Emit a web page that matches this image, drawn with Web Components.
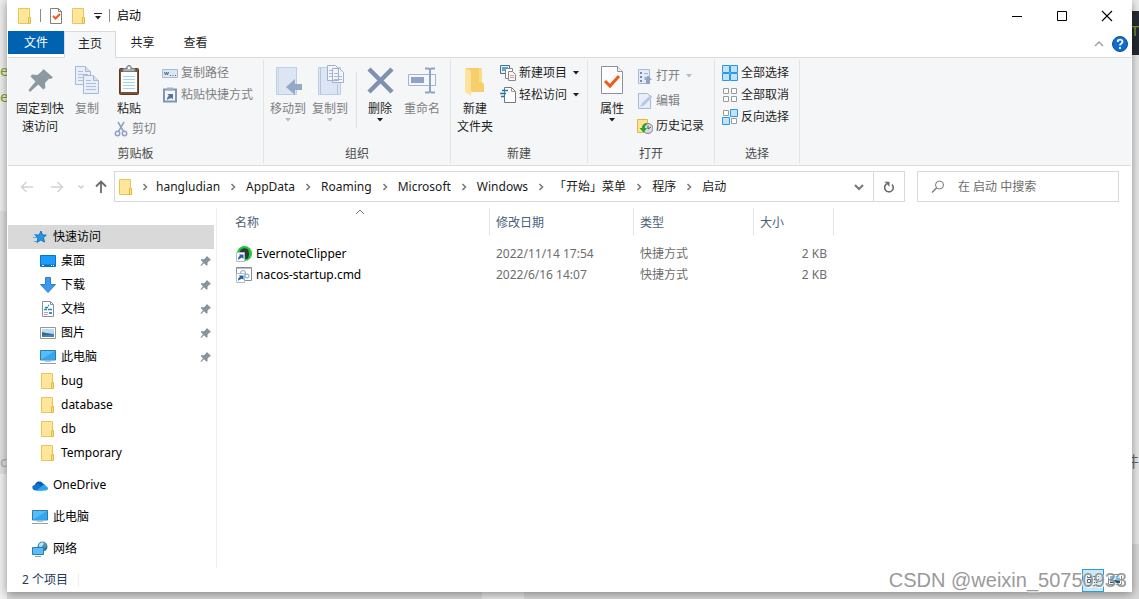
<!DOCTYPE html>
<html lang="zh-CN">
<head>
<meta charset="utf-8">
<meta name="viewport" content="width=device-width, initial-scale=1">
<title>启动</title>
<style>
html, body { margin: 0; height: 100%; }
body {
  font: 12px/18px "Noto Sans", "Noto Sans CJK SC", sans-serif;
  color: #000;
  --ink: #1e1e1e;
  --muted: #7d7f82;
  --line: #dadbdc;
  --pane: #f5f6f7;
  --accent: #0063b1;
}
</style>
</head>
<body>
<desk-top>
  <explorer-window>
    <title-bar slot="title" heading="启动"></title-bar>
    <tab-strip slot="tabs"></tab-strip>
    <ribbon-bar slot="ribbon">
      <ribbon-group label="剪贴板" style="--w:255px">
        <big-button icon="pin" style="--bw:64px">固定到快<br>速访问</big-button>
        <big-button icon="copy" off style="--bw:30px">复制</big-button>
        <ribbon-column style="--cw:54px;--al:flex-end">
          <big-button icon="paste" style="--bw:54px">粘贴</big-button>
          <small-button icon="cut" off>剪切</small-button>
        </ribbon-column>
        <ribbon-column style="--pl:5px">
          <small-button icon="path" off>复制路径</small-button>
          <small-button icon="pastelink" off>粘贴快捷方式</small-button>
        </ribbon-column>
      </ribbon-group>
      <ribbon-group label="组织" style="--w:186px">
        <big-button icon="moveto" off menu style="--bw:48px">移动到</big-button>
        <big-button icon="copyto" off menu style="--bw:36px">复制到</big-button>
        <ribbon-rule></ribbon-rule>
        <big-button icon="delete" menu style="--bw:40px">删除</big-button>
        <big-button icon="rename" off style="--bw:44px">重命名</big-button>
      </ribbon-group>
      <ribbon-group label="新建" style="--w:136px">
        <big-button icon="newfolder" style="--bw:48px">新建<br>文件夹</big-button>
        <ribbon-column>
          <small-button icon="newitem" menu>新建项目</small-button>
          <small-button icon="easy" menu>轻松访问</small-button>
        </ribbon-column>
      </ribbon-group>
      <ribbon-group label="打开" style="--w:126px">
        <big-button icon="props" menu style="--bw:48px">属性</big-button>
        <ribbon-column style="--pt:3px;--rg:3px">
          <small-button icon="open" off menu>打开</small-button>
          <small-button icon="edit" off>编辑</small-button>
          <small-button icon="history">历史记录</small-button>
        </ribbon-column>
      </ribbon-group>
      <ribbon-group label="选择" style="--w:84px">
        <ribbon-column style="--pl:6px">
          <small-button icon="selall">全部选择</small-button>
          <small-button icon="selnone">全部取消</small-button>
          <small-button icon="selinv">反向选择</small-button>
        </ribbon-column>
      </ribbon-group>
    </ribbon-bar>
    <address-bar slot="address"></address-bar>
    <nav-tree slot="nav">
      <nav-item icon="star" selected root>快速访问</nav-item>
      <nav-item icon="desktop" pinned>桌面</nav-item>
      <nav-item icon="download" pinned>下载</nav-item>
      <nav-item icon="docs" pinned>文档</nav-item>
      <nav-item icon="pics" pinned>图片</nav-item>
      <nav-item icon="pc" pinned>此电脑</nav-item>
      <nav-item icon="folder">bug</nav-item>
      <nav-item icon="folder">database</nav-item>
      <nav-item icon="folder">db</nav-item>
      <nav-item icon="folder">Temporary</nav-item>
      <nav-item icon="cloud" root spaced>OneDrive</nav-item>
      <nav-item icon="pc" root spaced>此电脑</nav-item>
      <nav-item icon="network" root spaced>网络</nav-item>
    </nav-tree>
    <file-list slot="files"></file-list>
    <status-bar slot="status">2 个项目</status-bar>
  </explorer-window>
  <span slot="mark">CSDN @weixin_50750933</span>
</desk-top>

<script>
const folder = '<path d="M1.5.5h11v15h-11z" fill="#ffe699" stroke="#e8c55a"/><path d="M11.500 9.500h2v6h-2z" fill="#ffe08a" stroke="#e3b93f"/>';
const shortcut = '<path d="M.5 6.500h8v9h-8z" fill="#fff" stroke="#b5bcc4"/><path d="M2 14c0-3 1-4 2-4L3 8.500h4.500V13L6 11.500C5 12.500 3.500 12.500 2 14z" fill="#1c5fb0"/>';
const tile = (x, y, on) => on
  ? `<path d="M${x + .5} ${y + .5}h7v7h-7z" fill="#bfe3fb" stroke="#2f96e6"/>`
  : `<path d="M${x + .5} ${y + .5}h5v5h-5z" fill="#fff" stroke="#9a9a9a"/>`;
const sheet = (x, y) => `<path d="M${x + .5} ${y + .5}h10l5 5v13h-15z" fill="#e9effa" stroke="#a9b8d4"/><path d="M${x + 10.500} ${y + .5}v5h5" fill="#d5dff0" stroke="#a9b8d4"/><path d="M${x + 3} ${y + 5.500}h5M${x + 3} ${y + 8.500}h10M${x + 3} ${y + 11.500}h10M${x + 3} ${y + 14.500}h10" stroke="#aebdd9"/>`;
const ICONS = {
  folder: [16, 16, folder],
  pin: [32, 32, '<path d="M19.500 5 29 13.500l-2.500 1.500-1.500-.3-4 4.300.3 5-2 1.500-5-5-8.300 7.500L4.500 26l7-8.500-5-5L8 10.500l5.500.5 4.500-4z" fill="#8d99a1"/>'],
  smallpin: [12, 12, '<path d="M7 1l4 4-1.500.8L7.500 7.500 7.600 10l-1 .7L4 8.200 1.200 11l-.8-.6L3 7.200.8 5l.8-1 2.600.2L6 2.300z" fill="#8593a0"/>'],
  copy: [32, 32, sheet(4, 2) + sheet(12, 11)],
  paste: [32, 32, '<rect x="6.500" y="4.500" width="19" height="26" rx="1" fill="#7a5236" stroke="#5b3a22"/><path d="M8 8h16v20H8z" fill="#fafdff"/><path d="M10 12.500h12M10 15.500h12M10 18.500h12M10 21.500h12M10 24.500h12" stroke="#a9d2ee"/><path d="M10 7.500V4.500h3.500c0-4 5-4 5 0H22v3z" fill="#a9aeb3" stroke="#777c81"/><circle cx="16" cy="4" r="1.200" fill="#fff"/>'],
  cut: [16, 16, '<g fill="none" stroke="#8fa2bf" stroke-width="1.500"><path d="M5 1l5.500 9.500M11 1L5.500 10.500"/><circle cx="4.500" cy="12.500" r="2.200"/><circle cx="11.500" cy="12.500" r="2.200"/></g>'],
  path: [16, 16, '<path d="M.5 4.500h15v8H.5z" fill="#dbe6f5" stroke="#a9bad3"/><path d="M2.500 7l1 3 1-3 1 3 1-3" fill="none" stroke="#53698c"/><path d="M8 10.500h1M10.500 10.500h1M13 10.500h1" stroke="#53698c"/>'],
  pastelink: [16, 16, '<path d="M2 2.500h12v12H2z" fill="#f4f8fd" stroke="#7f95b9" stroke-width="2"/><path d="M5 .5h6v3H5z" fill="#9fb1cc"/><path d="M5 13c0-3 1-4 2-4L5.500 7H11v5.500L9.500 11C8 12 6.500 11.500 5 13z" fill="#58729d"/>'],
  moveto: [32, 32, '<path d="M4.500 3.500h20v27h-20z" fill="#dbe5f4" stroke="#c0cee4"/><path d="M6.500 4v26" stroke="#c9d6ea"/><path d="M14 23l9-8v5h7v6h-7v5z" fill="#95a8c6"/>'],
  copyto: [32, 32, '<path d="M4.500 3.500h22v27h-22z" fill="#dbe5f4" stroke="#c0cee4"/><path d="M6.500 4v26M23.500 20v11" stroke="#b4c4dd"/><path d="M13.500 1.500h8l3 3v12h-11zM18.500 4.500h7l4 4v10h-11z" fill="#f2f6fc" stroke="#9fb1cf"/><path d="M15 6.500h3M15 9.500h3M15 12.500h3M20 9.500h4M20 12.500h8M20 15.500h8" stroke="#a9bad6"/>'],
  delete: [32, 32, '<path d="M5 5l23 23M28 5L5 28" stroke="#8090b0" stroke-width="4.500"/>'],
  rename: [32, 32, '<path d="M2.500 10.500h27v11h-27z" fill="#f4f8fe" stroke="#a3b4d2"/><path d="M5 13h13v6H5z" fill="#8ea3c6"/><path d="M24 5v23M19 4.500h3.500l1.500 1 1.500-1H29M19 28.500h3.500l1.500-1 1.500 1H29" fill="none" stroke="#8ea2c4" stroke-width="2"/>'],
  newfolder: [32, 32, '<path d="M7 4h16v14l2 2v8H10z" fill="#f6cf6a"/><path d="M6 4l6 3v25l-6-4z" fill="#ffe39a"/><path d="M20 4h3v14h-3z" fill="#fbdb85"/>'],
  newitem: [16, 16, '<path d="M.5.500h9v8h-9z" fill="#e2f2fb" stroke="#4a7186"/><path d="M2 2h6v4H2z" fill="#58a9d6"/><path d="M5.500 3.500h7v10h-7z" fill="#fff" stroke="#888"/><path d="M8.500 6.500h4l3 3v6h-7z" fill="#f5f7fa" stroke="#888"/><path d="M10 10.500h4M10 12.500h4" stroke="#e39a8b"/>'],
  easy: [16, 16, '<path d="M4.500.5h7l4 4v11h-11z" fill="#fff" stroke="#777"/><path d="M11.500.5v4h4" fill="none" stroke="#999"/><path d="M2 3.500h6M0 6.500h6M1 9.500h4" stroke="#1b76b8" stroke-width="1.500"/>'],
  props: [32, 32, '<path d="M5.500 2.500h16l5 5v22h-21z" fill="#fcfcfc" stroke="#8f9296"/><path d="M21.500 2.500v5h5" fill="#eee" stroke="#8f9296"/><path d="M9 17l5 5 9-10" fill="none" stroke="#f05a14" stroke-width="3"/>'],
  open: [16, 16, '<path d="M1.500 1.500h11v14h-11z" fill="#e3ebf7" stroke="#a9b9d3"/><path d="M3 4h2v2H3zM3 8h2v2H3zM3 12h2v2H3z" fill="#6f8ab5"/><path d="M7 5.500h4M7 9.500h3" stroke="#a0b2d0"/><path d="M9 16v-4H7l4-4.500 4 4.500h-2v4z" fill="#8ea3c6"/>'],
  edit: [16, 16, '<path d="M1.500.5h9l3 3v12h-12z" fill="#e6eefa" stroke="#a9b9d3"/><path d="M3 14l2-4 8.500-8 2 2-8.500 8.500z" fill="#b8c8e2"/>'],
  history: [16, 16, '<path d="M.5 1.500h10v13H.5z" fill="#ffe38f" stroke="#dcb84d"/><circle cx="11" cy="10.500" r="5" fill="#d9dcdf" stroke="#7d8286"/><path d="M11 7.500v3.500l3-2" fill="none" stroke="#555"/><path d="M9.500 5C6 5.500 5 8 5 10H2.500l4 4.500 3.500-4.500H7.800C8 8 8.500 7 10 6.500z" fill="#26a036"/>'],
  selall: [16, 16, tile(0, 0, 1) + tile(8, 0, 1) + tile(0, 8, 1) + tile(8, 8, 1)],
  selnone: [16, 16, tile(1, 1) + tile(9, 1) + tile(1, 9) + tile(9, 9)],
  selinv: [16, 16, tile(1, 1) + tile(8, 0, 1) + tile(0, 8, 1) + tile(9, 9)],
  star: [16, 16, '<path d="M9 2l1.500 4h3.800l-2.800 2.800 1 4.200L8.700 11 5 13.500 6 9 3.500 6.500 7.200 6z" fill="#2a93e0" stroke="#1576bd"/><path d="M2 5.500h4M1 8.500h4M2 12.500h3" stroke="#4aa9ea"/>'],
  desktop: [16, 16, '<path d="M.5 2.500h15v11H.5z" fill="#1a9dfc" stroke="#0d72c4"/><path d="M1 11.500h14v1.500H1z" fill="#0b6fc2"/><path d="M2 12.500h2M11 12.500h1M13 12.500h1" stroke="#fff"/>'],
  download: [16, 16, '<path d="M5.500.5h5v7h5L8 15.500.500 7.500h5z" fill="#3b98ea" stroke="#2a7ed0"/>'],
  docs: [16, 16, '<path d="M2.500.5h8l3 3v12h-11z" fill="#fff" stroke="#8b9096"/><path d="M10.500.5v3h3" fill="none" stroke="#8b9096"/><path d="M5 6.500h3M8 4.500h1M4 8.500h3M8 8.500h4" stroke="#1c86c8" stroke-width="1.500"/><path d="M4 11.500h4M4 13.500h4" stroke="#a5adb3"/><path d="M9 11h3v2H9z" fill="#4d8fa5"/>'],
  pics: [16, 16, '<path d="M.5 2.500h15v11H.5z" fill="#fff" stroke="#94989c"/><path d="M2 4h12v8H2z" fill="#b9dcf3"/><path d="M2 7l4 1 8 1v3H2z" fill="#356b74"/><path d="M2 10.500l12-1.500v3H2z" fill="#4b7fb6"/>'],
  pc: [16, 16, '<path d="M.5 1.500h15v9.500H.5z" fill="#56bdfa" stroke="#2f7cac"/><path d="M1 10.500L15 2v8.500z" fill="#35a6f3"/><path d="M5 12.500h6" stroke="#b5c4cf"/><path d="M0 14.500h16" stroke="#8f9fae"/>'],
  cloud: [16, 16, '<path d="M3 9c-.5-4 5-6.500 8-2.500L13 8l-8 5z" fill="#0a5cb5"/><path d="M4 13.500c-4.500 0-5-5-1-5.700C5 6.500 8 7.500 9 8.500l2 5z" fill="#1173d0"/><path d="M4.500 13.500L10 9c1-2 4-1.500 4.200.4 2.500.6 2.300 4-.4 4.100z" fill="#28a4ea"/>'],
  network: [16, 16, '<circle cx="10.500" cy="5.500" r="5" fill="#4f93b5"/><path d="M7 3.500c2-2.500 4-2.500 5-1L9.500 6 7 5.500z" fill="#bfe0ee"/><path d="M12 8l3-3c.5 2-.5 4-2 5z" fill="#2f6f94"/><path d="M.5 6.500h11v7H.5z" fill="#56bdfa" stroke="#2f7cac"/><path d="M3 15.500h6" stroke="#8f9fae"/>'],
  check: [16, 16, '<path d="M2.500.5h8l3 3v12h-11z" fill="#fdfdfd" stroke="#7f8285"/><path d="M10.500.5v3h3" fill="none" stroke="#7f8285"/><path d="M5 8l2.500 2.500L12 6" fill="none" stroke="#f05a14" stroke-width="2"/>'],
  evernote: [16, 16, '<circle cx="8.500" cy="7.500" r="7.500" fill="#1bcb35"/><path d="M4 6c0-4 7-5 8.500-1.500C13.500 8 13 12 11 13c-2 .5-2.500-1.500-1.500-2.500L8 9 4 8z" fill="#33353d"/>' + shortcut],
  cmd: [16, 16, '<path d="M.5.500h15v13H.5z" fill="#fff" stroke="#8a8d92"/><path d="M1 1.500h14" stroke="#b9bcc0"/><g fill="none" stroke="#8fa3b5"><circle cx="7" cy="6" r="2.500"/><circle cx="11" cy="9" r="2" stroke="#6ba6d0"/></g>' + shortcut],
  back: [14, 14, '<path d="M13 7H1.500M6.500 2L1.500 7l5 5" fill="none" stroke="#d2d2d2" stroke-width="1.500"/>'],
  forward: [14, 14, '<path d="M1 7h11.500M7.500 2l5 5-5 5" fill="none" stroke="#d2d2d2" stroke-width="1.500"/>'],
  up: [14, 14, '<path d="M7 13V2M2 6.500l5-5 5 5" fill="none" stroke="#6b6b6b" stroke-width="1.800"/>'],
  recent: [8, 8, '<path d="M1.500 2.500L4 5l2.500-2.500" fill="none" stroke="#cfcfcf" stroke-width="1.500"/>'],
  chevron: [8, 8, '<path d="M2.500 1L5.500 4l-3 3" fill="none" stroke="#777" stroke-width="1.500"/>'],
  drop: [10, 10, '<path d="M1 3l4 4 4-4" fill="none" stroke="#777" stroke-width="2"/>'],
  refresh: [12, 12, '<path d="M3.500 3A4.300 4.300 0 1 0 9 3.500" fill="none" stroke="#6b6b6b" stroke-width="1.600"/><path d="M1.500.800h5v5z" fill="#6b6b6b"/>'],
  search: [14, 14, '<circle cx="8.500" cy="5" r="4" fill="none" stroke="#777"/><path d="M5.500 8L1 12.500" stroke="#777" stroke-width="1.300"/>'],
  collapse: [10, 10, '<path d="M1 7l4-4 4 4" fill="none" stroke="#a0a0a0" stroke-width="1.500"/>'],
  sort: [10, 6, '<path d="M1 5l4-4 4 4" fill="none" stroke="#777"/>'],
  caret: [6, 4, '<path d="M0 0h6L3 3.500z" fill="currentColor"/>'],
  qat: [8, 8, '<path d="M0 1.500h8" stroke="#222"/><path d="M1 4h6L4 7.500z" fill="#222"/>'],
  help: [16, 16, '<circle cx="8" cy="8" r="7.500" fill="#0f6ecd" stroke="#0b4f97"/><path d="M5.700 6c0-3.200 4.800-3 4.800-.3C10.500 7.500 8 7.500 8 9.500M8 11v2" fill="none" stroke="#fff" stroke-width="1.800"/>'],
  min: [10, 10, '<path d="M0 5.500h10" stroke="#000"/>'],
  max: [10, 10, '<path d="M.5.500h9v9h-9z" fill="none" stroke="#000"/>'],
  close: [12, 12, '<path d="M1 1l10 10M11 1L1 11" stroke="#000" stroke-width="1.100"/>'],
  details: [14, 14, '<g stroke="#5f6b75"><path d="M1.500 1.500h3v3h-3zM1.500 6.500h3v3h-3z" fill="#fff"/><path d="M6 3.500h3M10 3.500h3M6 6.500h3M10 6.500h3M6 9.500h3M10 9.500h3M1 12.500h4M6 12.500h3M10 12.500h3"/></g>'],
  thumbs: [14, 14, '<path d="M.5 1.500h13v10H.5z" fill="#fff" stroke="#888"/><path d="M2 3h10v7H2z" fill="#7fbbe8"/><path d="M2 6l10 2v2H2z" fill="#2b5566"/>']
};

const RESET = `:host,*{box-sizing:border-box}button,input{font:inherit;color:inherit;border:0;background:none;padding:0;margin:0}a{color:inherit;text-decoration:none}`;

function define(name, css, html) {
  customElements.define(name, class extends HTMLElement {
    constructor() {
      super();
      const root = this.attachShadow({ mode: 'open' });
      const t = document.createElement('template');
      t.innerHTML = `<style>${RESET}${css}</style>${typeof html === 'function' ? html(this) : html}`;
      root.append(t.content.cloneNode(true));
    }
  });
}
const icon = name => `<ui-icon name="${name}"></ui-icon>`;

define('ui-icon', `:host{display:inline-block;flex:none;line-height:0}svg{display:block}`, el => {
  const [w, h, body] = ICONS[el.getAttribute('name')];
  return `<svg width="${w}" height="${h}" viewBox="0 0 ${w} ${h}" aria-hidden="true">${body}</svg>`;
});

define('desk-top', `
  :host{display:block;position:relative;min-height:100vh;padding:0 7px 7px;overflow:hidden;background:#d8d8d8}
  .l,.r{position:absolute;top:0;bottom:0;width:7px;overflow:hidden}
  .l{left:0;background:linear-gradient(#ececec 211px,#dfdfdf 211px 474px,#efefef 474px)}
  .r{right:0;background:linear-gradient(#ececec 11px,#262b31 11px 55px,#e8e8e8 55px 544px,#d8d8d8 544px)}
  .b{position:absolute;left:482px;width:42px;bottom:0;height:7px;background:#e8e8e8}
  .code{position:absolute;font:15px/20px "Noto Sans",sans-serif;color:#7f9f2b}
  .l .code{left:0}
  .r .code{right:0}
  .mark{position:absolute;right:12px;bottom:7px;font:20px/24px "Liberation Sans",sans-serif;color:#909090;opacity:.9;text-shadow:1px 1px 0 #fff;white-space:nowrap;pointer-events:none}
`, `
  <div class="l"><span class="code" style="top:60px">e</span><span class="code" style="top:86px">e</span><span class="code" style="top:451px;color:#aaa">c</span></div>
  <div class="r"><span class="code" style="top:20px">T</span><span class="code" style="top:451px;color:#666;font-family:'Noto Sans CJK SC',sans-serif">件</span></div>
  <div class="b"></div>
  <slot></slot>
  <div class="mark"><slot name="mark"></slot></div>`);

define('explorer-window', `
  :host{display:flex;flex-direction:column;position:relative;min-height:calc(100vh - 7px);background:#fff;padding:0 1px;box-shadow:0 2px 9px rgba(0,0,0,.4)}
  main{display:flex;flex:1;margin-left:-1px}
`, `<slot name="title"></slot><slot name="tabs"></slot><slot name="ribbon"></slot><slot name="address"></slot>
  <main><slot name="nav"></slot><slot name="files"></slot></main><slot name="status"></slot>`);

define('title-bar', `
  :host{display:flex;align-items:center;height:31px;padding:0 2px 0 9px}
  button{display:flex;align-items:center;justify-content:center}
  i{width:1px;height:13px;background:#8a8a8a}
  h1{font:inherit;margin:0 auto 0 7px}
  .qat{display:flex;align-items:center;gap:7px}
  .win button{width:45px;height:30px}.win{display:flex}
`, el => `
  <div class="qat">${icon('folder')}<i></i>
    <button aria-label="属性">${icon('check')}</button>
    <button aria-label="新建文件夹">${icon('folder')}</button>
    <button aria-label="自定义快速访问工具栏">${icon('qat')}</button><i></i></div>
  <h1>${el.getAttribute('heading')}</h1>
  <div class="win"><button aria-label="最小化">${icon('min')}</button><button aria-label="最大化">${icon('max')}</button><button aria-label="关闭">${icon('close')}</button></div>`);

define('tab-strip', `
  :host{display:flex;height:27px;border-bottom:1px solid var(--line)}
  button{width:53px;height:26px;color:var(--ink);padding-bottom:2px}
  .file{width:56px;height:23px;padding:0;background:var(--accent);color:#fff}
  .on{width:52px;height:27px;background:var(--pane);border:1px solid var(--line);border-bottom:0}
  .end{margin-left:auto;display:flex;align-items:center;gap:8px;padding-right:3px}
  .end button{width:auto;height:auto;padding:0;display:flex}
`, `<button class="file">文件</button><button class="on">主页</button><button>共享</button><button>查看</button>
  <div class="end"><button aria-label="最小化功能区">${icon('collapse')}</button><button aria-label="帮助">${icon('help')}</button></div>`);

define('ribbon-bar', `:host{display:flex;height:108px;background:var(--pane);border-bottom:1px solid var(--line);padding:2px 0}`, `<slot></slot>`);

define('ribbon-group', `
  :host{display:flex;flex-direction:column;width:calc(var(--w) + 1px);border-right:1px solid #e2e3e4;color:var(--ink)}
  .body{display:flex;flex:1;padding-top:2px}
  .label{text-align:center;color:#4a4a4a;height:18px}
`, el => `<div class="body"><slot></slot></div><div class="label">${el.getAttribute('label')}</div>`);

define('ribbon-column', `:host{display:flex;flex-direction:column;align-items:var(--al,flex-start);gap:var(--rg,0);width:var(--cw,auto);padding-left:var(--pl,0);padding-top:var(--pt,0)}`, `<slot></slot>`);
define('ribbon-rule', `:host{width:1px;height:56px;margin:10px 3px 0 8px;background:#dfe0e1}`, ``);

define('big-button', `
  :host{display:block;width:var(--bw);padding-top:2px}
  :host([off]){color:var(--muted)}
  button{display:flex;flex-direction:column;align-items:center;width:100%;white-space:nowrap}
  button>ui-icon{margin-bottom:4px}
  .m{height:4px;display:flex}
  :host([off]) .m{color:#b9babb}
`, el => `<button${el.hasAttribute('off') ? ' disabled' : ''}>${icon(el.getAttribute('icon'))}<span><slot></slot></span>${el.hasAttribute('menu') ? `<span class="m">${icon('caret')}</span>` : ''}</button>`);

define('small-button', `
  :host{display:block}
  :host([off]){color:var(--muted)}
  button{display:flex;align-items:center;gap:3px;height:22px;padding:0 0 0 1px;white-space:nowrap}
  .m{display:flex;margin-left:3px}
  :host([off]) .m{color:#b9babb}
`, el => `<button${el.hasAttribute('off') ? ' disabled' : ''}>${icon(el.getAttribute('icon'))}<span><slot></slot></span>${el.hasAttribute('menu') ? `<span class="m">${icon('caret')}</span>` : ''}</button>`);

define('address-bar', `
  :host{display:flex;align-items:center;height:42px;padding:0 12px 1px 4px;color:#1a1a1a}
  button{display:flex;align-items:center;justify-content:center}
  .go{display:flex;align-items:center;width:102px}
  .go button{width:30px}.go .n{width:17px}.go .u{width:23px}
  .box{display:flex;flex:1;height:31px;border:1px solid #d9d9d9}
  nav{display:flex;flex:1;align-items:center;padding-left:3px}
  nav .sep{display:flex;width:26px;justify-content:center}
  nav ui-icon+.sep{width:22px}
  .dd{width:29px}.rf{width:31px;border-left:1px solid #d9d9d9}
  .find{display:flex;align-items:center;width:202px;height:31px;margin-left:12px;border:1px solid #d9d9d9;padding-left:13px;gap:13px}
  input{flex:1;min-width:0;outline:0}input::placeholder{color:#6d6d6d;opacity:1}
`, `<div class="go"><button aria-label="后退">${icon('back')}</button><button aria-label="前进">${icon('forward')}</button><button class="n" aria-label="最近">${icon('recent')}</button><button class="u" aria-label="上移">${icon('up')}</button></div>
  <div class="box"><nav aria-label="路径">${icon('folder')}${['hangludian', 'AppData', 'Roaming', 'Microsoft', 'Windows', '「开始」菜单', '程序', '启动'].map(p => `<span class="sep">${icon('chevron')}</span><a href="#">${p}</a>`).join('')}</nav>
  <button class="dd" aria-label="以前的位置">${icon('drop')}</button><button class="rf" aria-label="刷新">${icon('refresh')}</button></div>
  <label class="find">${icon('search')}<input type="search" aria-label="搜索" placeholder="在 启动 中搜索"></label>`);

define('nav-tree', `:host{display:block;width:210px;padding:17px 2px 6px 1px;border-right:1px solid #f0f0f0}`, `<slot></slot>`);

define('nav-item', `
  :host{display:block}
  :host([spaced]){margin-top:8px}
  a{display:flex;align-items:center;height:24px;gap:5px;padding:0 2px 0 32px}
  :host([root]) a{padding-left:24px}
  :host([selected]) a{background:#d9d9d9}
  .pin{margin-left:auto;display:flex}
`, el => `<a href="#">${icon(el.getAttribute('icon'))}<span><slot></slot></span>${el.hasAttribute('pinned') ? `<span class="pin">${icon('smallpin')}</span>` : ''}</a>`);

define('file-list', `
  :host{display:block;flex:1;padding-left:11px}
  table{border-collapse:separate;border-spacing:0;table-layout:fixed;width:606px}
  th,td{padding:0 7px 0 6px;text-align:left;font-weight:400;white-space:nowrap}
  th{height:28px;padding-top:2px;color:#4c607a;border-right:1px solid #e5e5e5;position:relative}
  th:first-child,td:first-child{padding-left:7px}
  th ui-icon{position:absolute;left:127px;top:1px}
  td{height:21px;color:#6d6d6d}
  td:last-child{text-align:right}
  tbody::before{content:"";display:block;height:7px}
  td a{display:flex;align-items:center;gap:4px;color:#000;padding-left:1px}
`, `<table><colgroup><col style="width:262px"><col style="width:144px"><col style="width:120px"><col style="width:80px"></colgroup>
  <thead><tr><th>名称${icon('sort')}</th><th>修改日期</th><th>类型</th><th>大小</th></tr></thead>
  <tbody><tr><td><a href="#">${icon('evernote')}EvernoteClipper</a></td><td>2022/11/14 17:54</td><td>快捷方式</td><td>2 KB</td></tr>
  <tr><td><a href="#">${icon('cmd')}nacos-startup.cmd</a></td><td>2022/6/16 14:07</td><td>快捷方式</td><td>2 KB</td></tr></tbody></table>`);

define('status-bar', `
  :host{display:flex;align-items:center;height:24px;padding:0 5px 0 14px;color:#1e395b}
  .n{padding-right:10px;border-right:1px solid #eee;margin-right:auto;line-height:14px}
  button{width:22px;height:23px;display:flex;align-items:center;justify-content:center}
  .on{background:#cce8f7;border:1px solid #26a0da}
`, `<span class="n"><slot></slot></span><button class="on" aria-label="详细信息">${icon('details')}</button><button aria-label="大图标">${icon('thumbs')}</button>`);
</script>
</body>
</html>
